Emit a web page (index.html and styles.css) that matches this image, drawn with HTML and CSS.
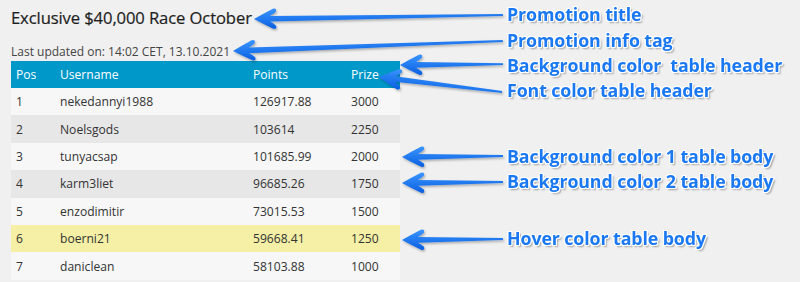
FILE: index.html
```html
<!DOCTYPE html>
<html lang="en">
<head>
<meta charset="utf-8">
<title>Promotion leaderboard</title>
<link rel="stylesheet" href="styles.css">
</head>
<body>
<main class="page">
  <h1 class="promo-title">Exclusive $40,000 Race October</h1>
  <p class="promo-info">Last updated on: 14:02 CET, 13.10.2021</p>
  <table class="board">
    <colgroup>
      <col class="c-pos"><col class="c-user"><col class="c-points"><col class="c-prize">
    </colgroup>
    <thead>
      <tr><th>Pos</th><th>Username</th><th>Points</th><th>Prize</th></tr>
    </thead>
    <tbody>
      <tr><td>1</td><td>nekedannyi1988</td><td>126917.88</td><td>3000</td></tr>
      <tr><td>2</td><td>Noelsgods</td><td>103614</td><td>2250</td></tr>
      <tr><td>3</td><td>tunyacsap</td><td>101685.99</td><td>2000</td></tr>
      <tr><td>4</td><td>karm3liet</td><td>96685.26</td><td>1750</td></tr>
      <tr><td>5</td><td>enzodimitir</td><td>73015.53</td><td>1500</td></tr>
      <tr class="is-hover"><td>6</td><td>boerni21</td><td>59668.41</td><td>1250</td></tr>
      <tr><td>7</td><td>daniclean</td><td>58103.88</td><td>1000</td></tr>
    </tbody>
  </table>
</main>

<div class="annotations">
  <svg class="arrows" width="800" height="282" viewBox="0 0 800 282">
    <defs>
      <linearGradient id="ag" x1="0" y1="0" x2="0" y2="1">
        <stop offset="0" stop-color="#3a95ff"/>
        <stop offset="1" stop-color="#0a5fe0"/>
      </linearGradient>
      <filter id="sh" x="-10%" y="-50%" width="120%" height="200%">
        <feDropShadow dx="1" dy="1.5" stdDeviation="0.8" flood-color="#000" flood-opacity="0.3"/>
      </filter>
    </defs>
    <g fill="url(#ag)" filter="url(#sh)">
      <path transform="translate(254,19) rotate(-0.92)" d="M0,0 Q9,-5 19,-10 Q23,-11 22,-7 Q19,-4.5 16,-2.8 L249,-0.9 L249,0.9 L16,2.8 Q19,4.5 22,7 Q23,11 19,10 Q9,5 0,0 Z"/>
      <path transform="translate(233,51) rotate(-2.12)" d="M0,0 Q9,-5 19,-10 Q23,-11 22,-7 Q19,-4.5 16,-2.8 L270,-0.9 L270,0.9 L16,2.8 Q19,4.5 22,7 Q23,11 19,10 Q9,5 0,0 Z"/>
      <path transform="translate(400,65) rotate(-0.5)" d="M0,0 Q9,-5 19,-10 Q23,-11 22,-7 Q19,-4.5 16,-2.8 L103,-0.9 L103,0.9 L16,2.8 Q19,4.5 22,7 Q23,11 19,10 Q9,5 0,0 Z"/>
      <path transform="translate(379,77) rotate(6.95)" d="M0,0 Q9,-5 19,-10 Q23,-11 22,-7 Q19,-4.5 16,-2.8 L124,-0.9 L124,0.9 L16,2.8 Q19,4.5 22,7 Q23,11 19,10 Q9,5 0,0 Z"/>
      <path transform="translate(402,157) rotate(-0.57)" d="M0,0 Q9,-5 19,-10 Q23,-11 22,-7 Q19,-4.5 16,-2.8 L101,-0.9 L101,0.9 L16,2.8 Q19,4.5 22,7 Q23,11 19,10 Q9,5 0,0 Z"/>
      <path transform="translate(402,183) rotate(-0.57)" d="M0,0 Q9,-5 19,-10 Q23,-11 22,-7 Q19,-4.5 16,-2.8 L101,-0.9 L101,0.9 L16,2.8 Q19,4.5 22,7 Q23,11 19,10 Q9,5 0,0 Z"/>
      <path transform="translate(402,240) rotate(-0.57)" d="M0,0 Q9,-5 19,-10 Q23,-11 22,-7 Q19,-4.5 16,-2.8 L101,-0.9 L101,0.9 L16,2.8 Q19,4.5 22,7 Q23,11 19,10 Q9,5 0,0 Z"/>
    </g>
  </svg>
  <ul class="labels">
    <li class="label l1">Promotion title</li>
    <li class="label l2">Promotion info tag</li>
    <li class="label l3">Background color&nbsp; table header</li>
    <li class="label l4">Font color table header</li>
    <li class="label l5">Background color 1 table body</li>
    <li class="label l6">Background color 2 table body</li>
    <li class="label l7">Hover color table body</li>
  </ul>
</div>
</body>
</html>
```

FILE: styles.css
```css
html, body {
  margin: 0;
  padding: 0;
  background: #f0f0f0;
}

body {
  width: 800px;
  height: 282px;
  overflow: hidden;
  position: relative;
  font-family: "Open Sans", "Noto Sans", "Liberation Sans", sans-serif;
  color: #333;
}

.page {
  padding-left: 11px;
}

.promo-title {
  margin: 6px 0 0;
  font-size: 16.6px;
  line-height: 24px;
  font-weight: 500;
  color: #1e1e1e;
  letter-spacing: -0.1px;
  -webkit-text-stroke: 0.2px #1e1e1e;
}

.promo-info {
  margin: 13px 0 0;
  font-size: 12px;
  line-height: 18px;
  color: #444;
}

.board {
  border-collapse: collapse;
  width: 389px;
  table-layout: fixed;
  font-size: 12.1px;
}

.c-pos { width: 44px; }
.c-user { width: 193px; }
.c-points { width: 98px; }
.c-prize { width: 54px; }

.board th {
  background: #0098c9;
  color: #fff;
  font-weight: 400;
  text-align: left;
  height: 27px;
  padding: 0 5px;
  line-height: 17px;
}

.board td {
  height: 27.4px;
  padding: 0 5px;
  line-height: 17px;
  color: #333;
}

.board tbody tr:nth-child(odd) td { background: #f7f7f7; }
.board tbody tr:nth-child(even) td { background: #e7e7e7; }
.board tbody tr.is-hover td { background: #f5f0a5; }

.annotations {
  position: absolute;
  inset: 0;
  pointer-events: none;
}

.arrows {
  position: absolute;
  left: 0;
  top: 0;
}

.labels {
  list-style: none;
  margin: 0;
  padding: 0;
}

.label {
  position: absolute;
  left: 507px;
  font-family: "Open Sans", "Noto Sans", sans-serif;
  font-weight: 700;
  font-size: 17.8px;
  line-height: 20px;
  color: #1a78f2;
  white-space: nowrap;
  letter-spacing: -0.1px;
  text-shadow:
    1px 0 0 #fff, -1px 0 0 #fff, 0 1px 0 #fff, 0 -1px 0 #fff,
    1px 1px 0 #fff, -1px -1px 0 #fff, 1px -1px 0 #fff, -1px 1px 0 #fff,
    2px 2px 2px rgba(0, 0, 0, 0.35);
}

.l1 { top: 4px; }
.l2 { top: 30px; }
.l3 { top: 55px; }
.l4 { top: 80px; }
.l5 { top: 146px; }
.l6 { top: 171px; }
.l7 { top: 228px; }
```
